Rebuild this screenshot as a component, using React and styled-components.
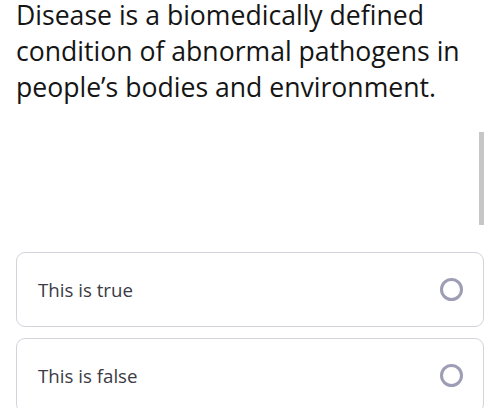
import React from "react";
import styled, { createGlobalStyle } from "styled-components";

const GlobalStyle = createGlobalStyle`
  html, body {
    margin: 0;
    padding: 0;
    background: #ffffff;
  }
  body {
    font-family: "Open Sans", "Noto Sans", sans-serif;
    overflow: hidden;
  }
`;

const Page = styled.div`
  position: relative;
  width: 500px;
  height: 408px;
  overflow: hidden;
  padding: 0 16px;
  box-sizing: border-box;
`;

const Question = styled.h1`
  margin: -3px 0 0;
  font-size: 26.6px;
  line-height: 36px;
  font-weight: 400;
  color: #151515;
  letter-spacing: 0;
`;

const ScrollThumb = styled.div`
  position: absolute;
  left: 479px;
  top: 132px;
  width: 5px;
  height: 93px;
  background: #c6c6c6;
`;

const Options = styled.div`
  display: flex;
  flex-direction: column;
  gap: 11px;
  margin-top: 147px;
`;

const Option = styled.label`
  display: flex;
  align-items: center;
  justify-content: space-between;
  height: 75px;
  box-sizing: border-box;
  padding: 0 20px 0 21px;
  border: 1px solid #d3d3db;
  border-radius: 9px;
  background: #ffffff;
  cursor: pointer;
`;

const OptionText = styled.span`
  font-size: 18.7px;
  color: #3b3b45;
`;

const Radio = styled.span`
  width: 23px;
  height: 23px;
  box-sizing: border-box;
  border-radius: 50%;
  border: 3px solid #9d9db5;
`;

const choices = ["This is true", "This is false"];

export default function App() {
  return (
    <>
      <GlobalStyle />
      <Page>
        <Question>
          Disease is a biomedically defined condition of abnormal pathogens in
          people’s bodies and environment.
        </Question>
        <ScrollThumb />
        <Options>
          {choices.map((c) => (
            <Option key={c}>
              <OptionText>{c}</OptionText>
              <Radio />
            </Option>
          ))}
        </Options>
      </Page>
    </>
  );
}
